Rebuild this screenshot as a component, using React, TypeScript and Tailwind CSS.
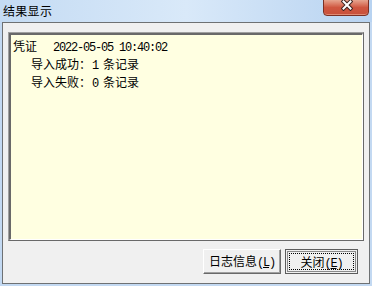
const mono = "font-['Liberation_Mono',monospace] text-[12px] tracking-[-1.2px]";

export default function App() {
  return (
    <div className="w-[372px] h-[286px] bg-[#c3d9f2] flex flex-col overflow-hidden font-['Noto_Sans_CJK_SC',sans-serif] text-black">
      {/* title bar */}
      <div className="h-[22px] shrink-0 relative bg-gradient-to-r from-[#c4dbf3] via-[#d9e9f9] to-[#b8d3f1]">
        <span className="absolute left-[3px] top-[3px] text-[12px] leading-[16px] tracking-[0.3px]">结果显示</span>
        <div className="absolute left-[323px] top-[-1px] w-[46px] h-[17px] rounded-b-[4px] border border-[#7b3024] bg-gradient-to-b from-[#e6a48f] via-[#cf5640] to-[#c8503b] shadow-[inset_0_-1px_0_#e08a74]">
          <svg className="absolute left-[17px] top-[0px]" width="12" height="11" viewBox="0 0 12 11">
            <path d="M2.5 1.5 L9.5 8.5 M9.5 1.5 L2.5 8.5" stroke="#3d2420" strokeWidth="4" strokeLinecap="square" />
            <path d="M2.5 1.5 L9.5 8.5 M9.5 1.5 L2.5 8.5" stroke="#ffffff" strokeWidth="2" strokeLinecap="square" />
          </svg>
        </div>
      </div>

      {/* client area */}
      <div className="mx-[2px] mb-[2px] flex-1 border border-[#6e7173] bg-[#f0f0f0] flex flex-col px-[5px] pt-[9px]">
        <div className="h-[209px] border border-t-[#a0a0a0] border-l-[#a0a0a0] border-r-[#696969] border-b-[#696969]">
          <div className="h-full border-t-2 border-l-2 border-r border-b border-t-[#696969] border-l-[#696969] border-r-white border-b-white bg-[#ffffe1] pl-[2px] pt-[3px] text-[12px] leading-[15px] whitespace-pre">
            <div className="flex items-baseline">
              <span>凭证</span>
              <span className={`ml-[16px] ${mono}`}>2022-05-05 10:40:02</span>
            </div>
            <div className="flex items-baseline pl-[18px]">
              <span>导入成功：</span>
              <span className={`${mono} ml-[1px] mr-[5px]`}>1</span>
              <span>条记录</span>
            </div>
            <div className="flex items-baseline pl-[18px]">
              <span>导入失败：</span>
              <span className={`${mono} ml-[1px] mr-[5px]`}>0</span>
              <span>条记录</span>
            </div>
          </div>
        </div>

        <div className="mt-[8px] flex justify-end gap-[4px] pr-[6px]">
          <button className="w-[78px] h-[25px] border border-t-white border-l-white border-r-[#696969] border-b-[#696969] bg-[#f0f0f0] shadow-[inset_-1px_-1px_0_#a0a0a0] flex items-baseline justify-center pt-[4px] text-[12px] leading-[14px]">
            <span>日志信息</span>
            <span className={mono}>(<span className="underline">L</span>)</span>
          </button>
          <button className="w-[73px] h-[25px] border border-[#5c5c5c] bg-[#f0f0f0] p-[1px]">
            <div className="h-full border border-[#8a8a8a] p-[1px]">
              <div className="h-full border border-dotted border-black flex items-baseline justify-center pt-[1px] text-[12px] leading-[14px]">
                <span>关闭</span>
                <span className={mono}>(<span className="underline">E</span>)</span>
              </div>
            </div>
          </button>
        </div>
      </div>
    </div>
  );
}
